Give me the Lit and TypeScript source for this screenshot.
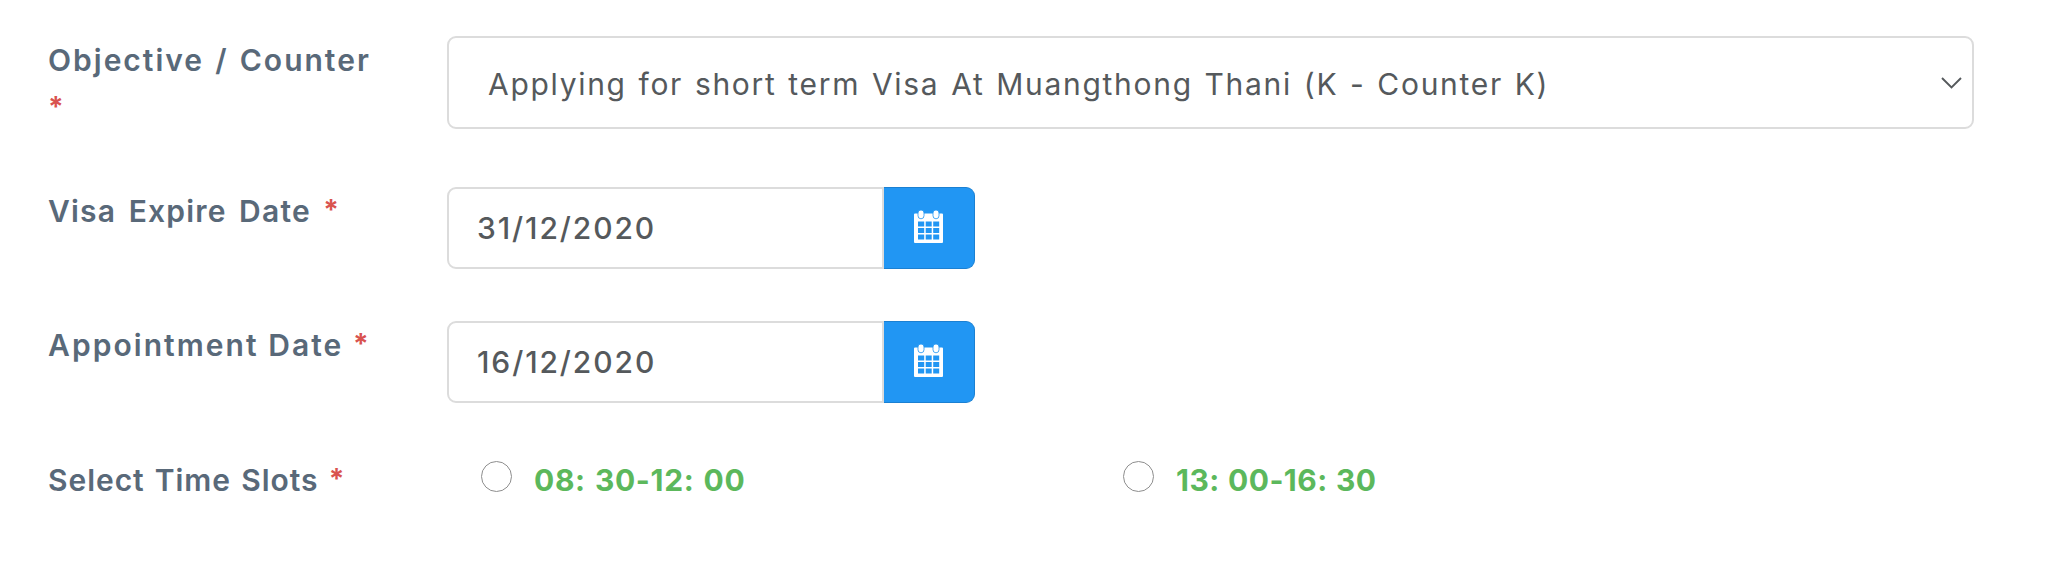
import { LitElement, html, css, svg } from 'lit';
import { customElement, property } from 'lit/decorators.js';

const calendarIcon = svg`
  <path fill="#fff" fill-rule="evenodd" d="M1 3.500H28a1 1 0 0 1 1 1V32a1 1 0 0 1-1 1H1a1 1 0 0 1-1-1V4.500a1 1 0 0 1 1-1z
    M4 11.500v5h6.200v-5z M11.700 11.500v5h6v-5z M19.200 11.500v5h6v-5z
    M4 18v5h6.200v-5z M11.700 18v5h6v-5z M19.200 18v5h6v-5z
    M4 24.500v5h6.200v-5z M11.700 24.500v5h6v-5z M19.200 24.500v5h6v-5z"/>
  <rect x="4" y="0" width="6" height="8.800" rx="3" fill="#fff" stroke="#2196f3" stroke-width="0.800"/>
  <rect x="19" y="0" width="6" height="8.800" rx="3" fill="#fff" stroke="#2196f3" stroke-width="0.800"/>`;

@customElement('form-row')
class FormRow extends LitElement {
  @property() label = '';
  static styles = css`
    :host { display: grid; grid-template-columns: 399px 1fr; align-items: start; }
    .label { width: 340px; line-height: 48px; font-weight: 600; color: #596979; }
    .star { color: #d9534f; font-size: 28px; font-weight: 700; letter-spacing: 0; line-height: 1; vertical-align: 2px; }
  `;
  render() {
    return html`<div class="label">${this.label} <span class="star">*</span></div><slot></slot>`;
  }
}

@customElement('date-field')
class DateField extends LitElement {
  @property() value = '';
  static styles = css`
    :host { display: flex; width: 528px; height: 82px; }
    .input {
      flex: 1; box-sizing: border-box; display: flex; align-items: center;
      padding: 0 0 1px 28px; border: 2px solid #dcdcdc; border-radius: 9px 0 0 9px;
      font-weight: 500; letter-spacing: 1.900px; color: #55595c; background: #fff;
    }
    .button {
      width: 91px; box-sizing: border-box; display: flex; align-items: center; justify-content: center;
      background: #2196f3; border: 1.500px solid #1b80d2; border-left: 0; border-radius: 0 9px 9px 0;
    }
    svg { display: block; overflow: visible; margin: 0 1px 3px 0; }
  `;
  render() {
    return html`
      <div class="input">${this.value}</div>
      <div class="button"><svg width="29" height="33" viewBox="0 0 29 33">${calendarIcon}</svg></div>`;
  }
}

@customElement('app-root')
class AppRoot extends LitElement {
  static styles = css`
    :host {
      display: flex; flex-direction: column; box-sizing: border-box; height: 562px;
      padding: 36px 74px 0 48px; background: #fff;
      font-family: Inter, "Open Sans", sans-serif; font-size: 30px;
    }
    .objective { height: 151px; letter-spacing: 2px; word-spacing: 1.600px; }
    .expire { height: 134px; letter-spacing: 1.200px; word-spacing: 3.700px; }
    .appointment { height: 135px; letter-spacing: 2.050px; }
    .slots { letter-spacing: 0.950px; word-spacing: 1.700px; }
    .select {
      height: 93px; box-sizing: border-box; display: flex; align-items: center; justify-content: space-between;
      padding: 3px 10px 0 39px; border: 2px solid #dcdcdc; border-radius: 9px;
      color: #55595c; letter-spacing: 1.700px; word-spacing: 1.650px; white-space: nowrap;
    }
    .chevron { display: block; margin-bottom: 3px; }
    .options { display: grid; grid-template-columns: 642px 1fr; padding-left: 34px; }
    .option {
      display: flex; align-items: flex-start; gap: 22px; line-height: 48px;
      font-weight: 700; color: #5cb85c; white-space: nowrap; letter-spacing: 0.650px; word-spacing: 1.500px;
    }
    .late { letter-spacing: 0.450px; word-spacing: 0.800px; }
    .radio {
      width: 31px; height: 31px; box-sizing: border-box; margin-top: 5px;
      border: 1px solid #8e8e8e; border-radius: 50%; background: #fff;
    }
  `;
  render() {
    return html`
      <form-row class="objective" label="Objective / Counter">
        <div class="select">
          <span>Applying for short term Visa At Muangthong Thani (K - Counter K)</span>
          <svg class="chevron" width="21" height="12" viewBox="0 0 21 12">
            <path d="M1 1l9.500 9.500L20 1" fill="none" stroke="#55595c" stroke-width="1.900"/>
          </svg>
        </div>
      </form-row>
      <form-row class="expire" label="Visa Expire Date"><date-field value="31/12/2020"></date-field></form-row>
      <form-row class="appointment" label="Appointment Date"><date-field value="16/12/2020"></date-field></form-row>
      <form-row class="slots" label="Select Time Slots">
        <div class="options">
          <div class="option"><span class="radio"></span><span>08: 30-12: 00</span></div>
          <div class="option late"><span class="radio"></span><span>13: 00-16: 30</span></div>
        </div>
      </form-row>`;
  }
}
